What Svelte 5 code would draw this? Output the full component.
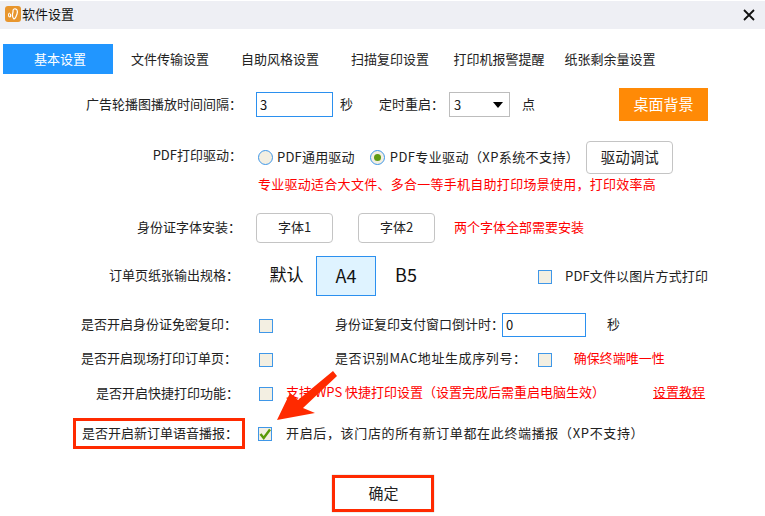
<script>
	const tabs = ['基本设置', '文件传输设置', '自助风格设置', '扫描复印设置', '打印机报警提醒', '纸张剩余量设置'];
</script>

<div class="win">
	<div class="title">
		<svg class="logo" width="16" height="16" viewBox="0 0 16 16">
			<rect width="16" height="16" rx="3" fill="#e8962e" />
			<path d="M9 3c3-1 4 2 3 5-1 3-2 5-3 5-1-1-2-4-1-7 0-1 0-3 1-3z" fill="none" stroke="#fff" stroke-width="1.2" />
			<path d="M5 7C3 7 3 11 5 11 6 11 6 8 5 8" fill="none" stroke="#fff" stroke-width="1.1" />
		</svg>
		<span>软件设置</span>
		<svg class="close" width="12" height="12" viewBox="0 0 12 12">
			<path d="M1 1l10 10M11 1L1 11" stroke="#111" stroke-width="1.8" />
		</svg>
	</div>

	<div class="tabs">
		{#each tabs as tab, i}
			<div class="tab" class:active={i === 0}>{tab}</div>
		{/each}
	</div>

	<div class="row r1">
		<div class="label">广告轮播图播放时间间隔：</div>
		<div class="input short">3</div>
		<span class="unit">秒</span>
		<span class="restart">定时重启：</span>
		<div class="select">3<i class="caret"></i></div>
		<span class="unit dot">点</span>
		<div class="orange">桌面背景</div>
	</div>

	<div class="row r2">
		<div class="label">PDF打印驱动：</div>
		<i class="radio"></i>
		<span class="rtext first">PDF通用驱动</span>
		<i class="radio on"></i>
		<span class="rtext second">PDF专业驱动（XP系统不支持）</span>
		<div class="btn debug">驱动调试</div>
	</div>
	<div class="row r2b">
		<div class="label"></div>
		<span class="red">专业驱动适合大文件、多合一等手机自助打印场景使用，打印效率高</span>
	</div>

	<div class="row r3">
		<div class="label">身份证字体安装：</div>
		<div class="btn font">字体1</div>
		<div class="btn font">字体2</div>
		<span class="red">两个字体全部需要安装</span>
	</div>

	<div class="row r4">
		<div class="label">订单页纸张输出规格：</div>
		<span class="size">默认</span>
		<span class="size sel">A4</span>
		<span class="size">B5</span>
		<i class="check pdf"></i>
		<span class="pdftext">PDF文件以图片方式打印</span>
	</div>

	<div class="row r5">
		<div class="label">是否开启身份证免密复印：</div>
		<i class="check"></i>
		<span class="mid">身份证复印支付窗口倒计时：</span>
		<div class="input count">0</div>
		<span class="unit sec">秒</span>
	</div>

	<div class="row r6">
		<div class="label">是否开启现场打印订单页：</div>
		<i class="check"></i>
		<span class="mid">是否识别MAC地址生成序列号：</span>
		<i class="check mac"></i>
		<span class="red">确保终端唯一性</span>
	</div>

	<div class="row r7">
		<div class="label">是否开启快捷打印功能：</div>
		<i class="check"></i>
		<span class="red hint">支持 WPS 快捷打印设置（设置完成后需重启电脑生效）</span>
		<span class="red link">设置教程</span>
	</div>

	<div class="row r8">
		<div class="label"><span class="boxed">是否开启新订单语音播报：</span></div>
		<i class="check on">
			<svg width="14" height="14" viewBox="0 0 14 14"><path d="M2.5 7l3.2 4L12 2.5" fill="none" stroke="#5a9a08" stroke-width="2.4" /></svg>
		</i>
		<span class="hint">开启后，该门店的所有新订单都在此终端播报（XP不支持）</span>
	</div>

	<div class="foot">
		<div class="ok">确定</div>
	</div>

	<svg class="arrow" width="70" height="60" viewBox="0 0 70 60">
		<polygon points="3,56 16,29 24,36 59,7 63,12 29,44 41,49" fill="#ff2a00" />
	</svg>
</div>

<style>
	:global(body) {
		background: #fff;
	}

	.win {
		position: relative;
		width: 765px;
		height: 516px;
		overflow: hidden;
		font-family: "Noto Sans CJK SC", "Noto Sans", sans-serif;
		font-size: 13px;
		color: #222;
		background: #fff;
	}

	.title {
		display: flex;
		align-items: center;
		height: 28px;
		margin-top: 1px;
		padding: 0 10px 0 5px;
		background: #eeeff4;
		font-size: 13px;
		color: #111;
	}

	.title span {
		margin-left: 1px;
		padding-bottom: 3px;
		flex: 1;
	}

	.logo {
		margin-top: -3px;
	}

	.close {
		margin-top: -1px;
	}

	.tabs {
		display: flex;
		align-items: center;
		height: 30px;
		margin: 15px 0 0 3px;
	}

	.tab {
		box-sizing: border-box;
		height: 30px;
		line-height: 29px;
		text-align: center;
		white-space: nowrap;
		width: 110px;
		padding-left: 4px;
	}

	.tab:nth-child(5) {
		padding-left: 2px;
	}

	.tab:nth-child(6) {
		width: 112px;
		padding-left: 2px;
	}

	.tab.active {
		background: #2196ff;
		color: #fff;
	}

	.row {
		display: flex;
		align-items: center;
		white-space: nowrap;
	}

	.row > span {
		padding-bottom: 1px;
	}

	.r3 > span,
	.r5 > span,
	.r6 > span,
	.r7 > span,
	.r8 > span {
		padding-bottom: 3px;
	}

	.label {
		box-sizing: border-box;
		width: 243px;
		flex: none;
		padding-bottom: 2px;
		text-align: right;
	}

	.r1 {
		height: 34px;
		margin-top: 13px;
	}

	.r1 .label,
	.r2 .label {
		padding-right: 1px;
	}

	.r2 .label {
		padding-bottom: 5px;
	}

	.input {
		box-sizing: border-box;
		height: 25px;
		line-height: 23px;
		padding-left: 3px;
		border: 1px solid #2b90ef;
		font-size: 13px;
		color: #111;
	}

	.short {
		width: 77px;
		margin-left: 13px;
	}

	.unit {
		margin-left: 7px;
	}

	.restart {
		margin-left: 26px;
	}

	.select {
		box-sizing: border-box;
		display: flex;
		align-items: center;
		justify-content: space-between;
		width: 61px;
		height: 25px;
		margin: 1px 0 0 5px;
		padding: 0 6px 0 4px;
		border: 1px solid #bdbdbd;
	}

	.caret {
		width: 0;
		height: 0;
		border-style: solid;
		border-color: #000 transparent transparent;
		border-width: 6px 5px 0;
	}

	.dot {
		margin-left: 12px;
	}

	.orange {
		width: 89px;
		height: 33px;
		line-height: 31px;
		margin-left: 84px;
		background: #ff8a06;
		color: #fff;
		text-align: center;
		font-size: 15px;
	}

	.r2 {
		height: 34px;
		margin-top: 19px;
	}

	.radio {
		box-sizing: border-box;
		flex: none;
		width: 15px;
		height: 15px;
		margin-left: 15px;
		border: 1px solid #3f97e8;
		border-radius: 50%;
		background: #f3efe2;
	}

	.radio.on {
		position: relative;
	}

	.radio.on::after {
		content: "";
		position: absolute;
		left: 3px;
		top: 3px;
		width: 7px;
		height: 7px;
		border-radius: 50%;
		background: #5f9a10;
	}

	.rtext {
		margin-left: 4px;
		letter-spacing: 0.2px;
	}

	.rtext.second {
		margin-left: 5px;
		letter-spacing: 0.4px;
	}

	.btn {
		box-sizing: border-box;
		border: 1px solid #c4c4c4;
		border-radius: 4px;
		text-align: center;
		background: #fff;
	}

	.debug {
		width: 87px;
		height: 33px;
		line-height: 29px;
		margin-left: 7px;
		font-size: 14.5px;
	}

	.r2b {
		height: 20px;
	}

	.red {
		color: #f00;
	}

	.r2b .red {
		margin-left: 15px;
		letter-spacing: 0.27px;
	}

	.r3 {
		height: 30px;
		margin-top: 19px;
	}

	.r3 .label {
		padding-right: 2px;
		padding-bottom: 3px;
	}

	.font {
		width: 77px;
		height: 30px;
		line-height: 26px;
		margin-left: 13px;
	}

	.font + .font {
		margin-left: 25px;
	}

	.font + .red {
		margin-left: 19px;
	}

	.r4 {
		height: 40px;
		margin-top: 13px;
	}

	.r4 .label {
		padding-right: 4px;
		padding-bottom: 3px;
	}

	.size {
		width: 60px;
		height: 40px;
		line-height: 36px;
		box-sizing: border-box;
		text-align: center;
		font-size: 18px;
		color: #111;
	}

	.size:first-of-type {
		margin-left: 14px;
		width: 59px;
		font-size: 17px;
	}

	.sel {
		border: 1px solid #2b90ef;
		background: #dff3ff;
	}

	.check {
		box-sizing: border-box;
		position: relative;
		flex: none;
		width: 14px;
		height: 14px;
		margin: 1px 0 0 16px;
		border: 1px solid #3f97e8;
		background: #f3efe2;
	}

	.check svg {
		position: absolute;
		left: -1px;
		top: -1px;
	}

	.pdf {
		margin-left: 102px;
		margin-right: 13px;
	}

	.pdftext {
		letter-spacing: 0.15px;
	}

	.r5 {
		height: 24px;
		margin-top: 17px;
	}

	.r5 .label,
	.r6 .label {
		padding-right: 6px;
		padding-bottom: 3px;
	}

	.mid {
		margin-left: 62px;
	}

	.count {
		width: 84px;
		height: 24px;
		line-height: 22px;
		margin-left: -2px;
	}

	.sec {
		margin-left: 21px;
	}

	.r6 {
		height: 24px;
		margin-top: 10px;
	}

	.r6 .mid {
		letter-spacing: 0.6px;
	}

	.mac {
		margin-left: 11px;
	}

	.mac + .red {
		margin-left: 22px;
	}

	.r7 {
		height: 24px;
		margin-top: 10px;
	}

	.r7 .label {
		padding-right: 4px;
		padding-bottom: 2px;
	}

	.hint {
		margin-left: 13px;
	}

	.link {
		margin-left: 48px;
		text-decoration: underline;
	}

	.r8 {
		height: 31px;
		margin-top: 13px;
	}

	.r8 .label {
		display: flex;
		justify-content: flex-end;
		padding-bottom: 0;
	}

	.boxed {
		box-sizing: border-box;
		margin-right: -2px;
		height: 31px;
		line-height: 23px;
		padding: 0 4px 0 6px;
		border: 3px solid #ff2a00;
	}

	.r8 .check {
		margin-left: 15px;
	}

	.r8 .hint {
		margin-left: 14px;
		letter-spacing: 0.65px;
	}

	.foot {
		display: flex;
		margin-top: 26px;
		padding-left: 332px;
	}

	.ok {
		box-sizing: border-box;
		width: 102px;
		height: 37px;
		line-height: 29px;
		padding-left: 1px;
		border: 3px solid #ff2a00;
		text-align: center;
		font-size: 15px;
		box-shadow: 0 0 1px #999;
	}

	.arrow {
		position: absolute;
		left: 274px;
		top: 364px;
	}
</style>
